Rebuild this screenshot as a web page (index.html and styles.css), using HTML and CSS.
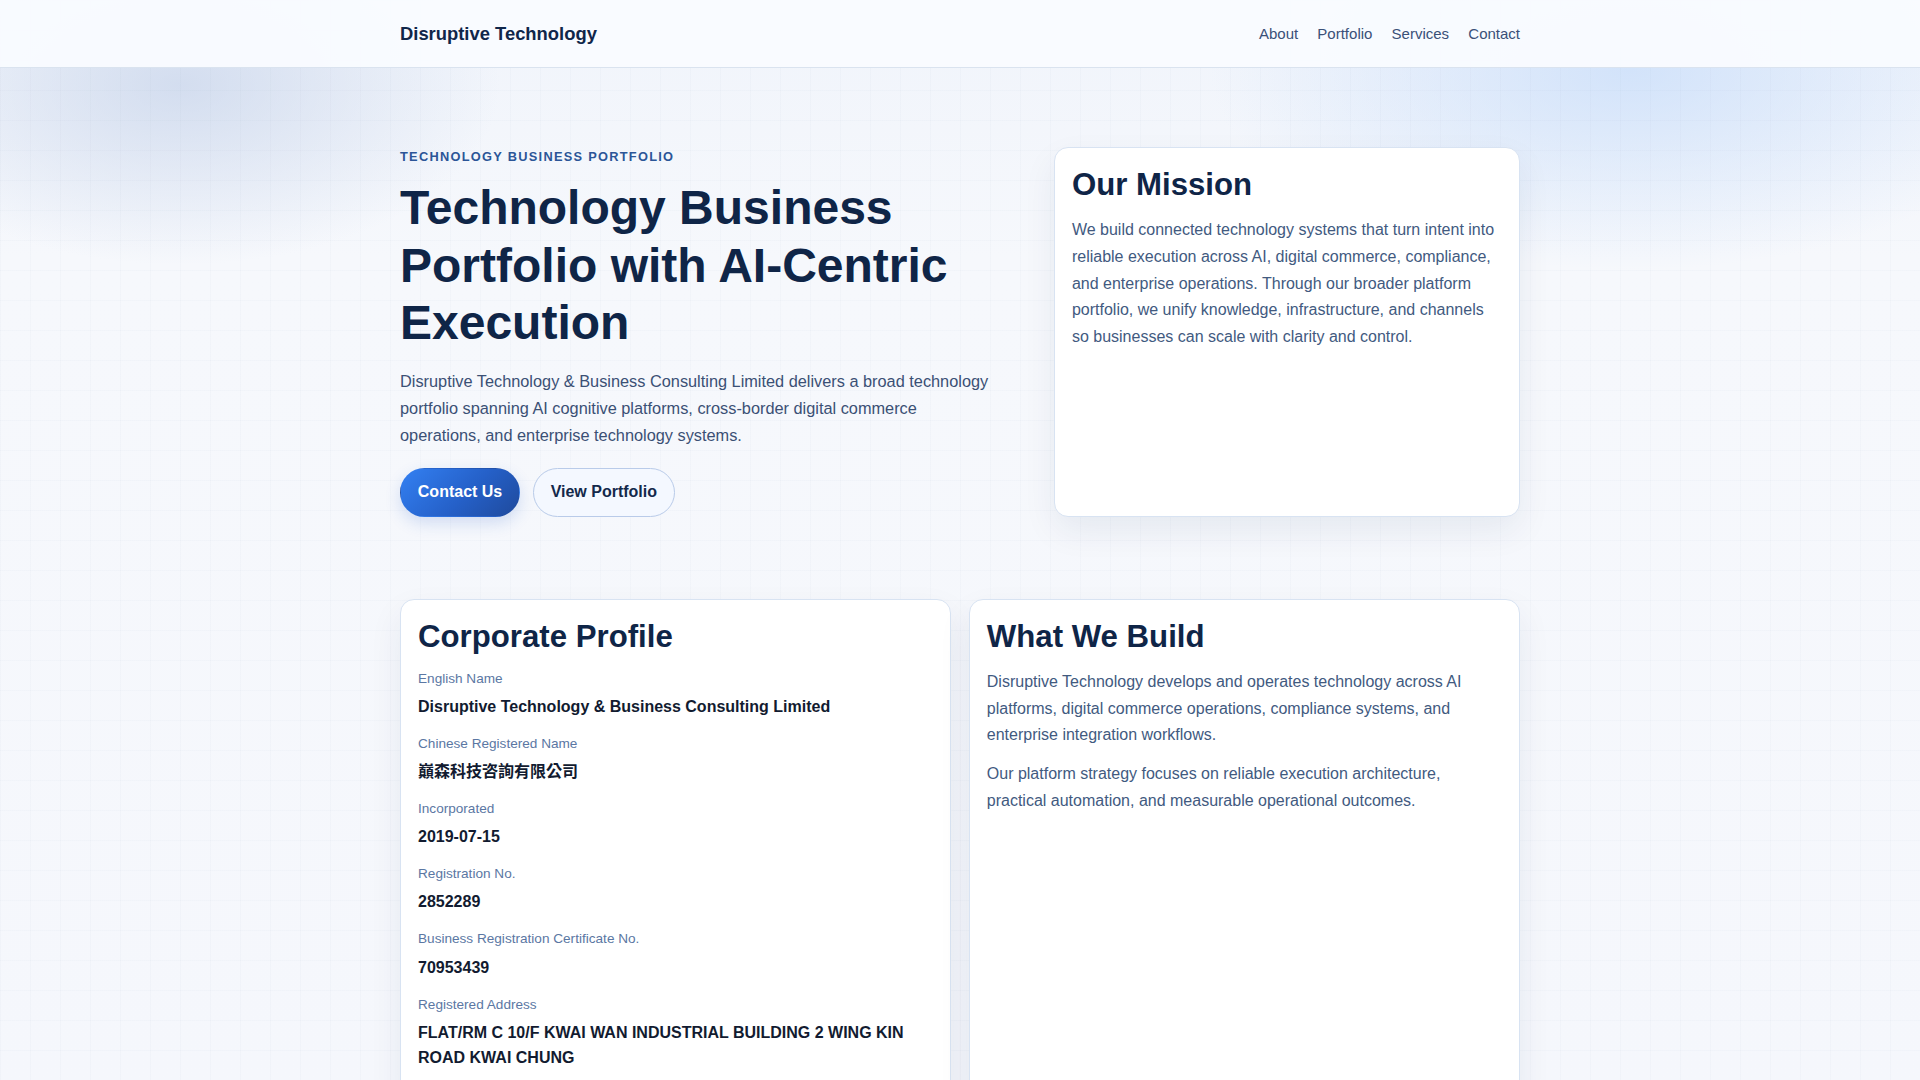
FILE: index.html
```html
<!DOCTYPE html>
<html lang="en">
<head>
<meta charset="utf-8">
<title>Disruptive Technology</title>
<link rel="stylesheet" href="styles.css">
</head>
<body>
<header class="site-header">
  <div class="container header-inner">
    <a class="brand" href="#">Disruptive Technology</a>
    <nav class="nav">
      <a href="#about">About</a>
      <a href="#portfolio">Portfolio</a>
      <a href="#services">Services</a>
      <a href="#contact">Contact</a>
    </nav>
  </div>
</header>

<main>
  <section class="hero">
    <div class="container hero-grid">
      <div class="hero-copy">
        <p class="eyebrow">Technology Business Portfolio</p>
        <h1>Technology Business Portfolio with AI-Centric Execution</h1>
        <p class="lead">Disruptive Technology &amp; Business Consulting Limited delivers a broad technology portfolio spanning AI cognitive platforms, cross-border digital commerce operations, and enterprise technology systems.</p>
        <div class="actions">
          <a class="btn btn-primary" href="#contact">Contact Us</a>
          <a class="btn btn-secondary" href="#portfolio">View Portfolio</a>
        </div>
      </div>
      <aside class="card">
        <h2>Our Mission</h2>
        <p>We build connected technology systems that turn intent into reliable execution across AI, digital commerce, compliance, and enterprise operations. Through our broader platform portfolio, we unify knowledge, infrastructure, and channels so businesses can scale with clarity and control.</p>
      </aside>
    </div>
  </section>

  <section class="info" id="about">
    <div class="container info-grid">
      <article class="card">
        <h2>Corporate Profile</h2>
        <dl class="facts">
          <div class="fact"><dt>English Name</dt><dd>Disruptive Technology &amp; Business Consulting Limited</dd></div>
          <div class="fact"><dt>Chinese Registered Name</dt><dd lang="zh-Hant">巔森科技咨詢有限公司</dd></div>
          <div class="fact"><dt>Incorporated</dt><dd>2019-07-15</dd></div>
          <div class="fact"><dt>Registration No.</dt><dd>2852289</dd></div>
          <div class="fact"><dt>Business Registration Certificate No.</dt><dd>70953439</dd></div>
          <div class="fact"><dt>Registered Address</dt><dd>FLAT/RM C 10/F KWAI WAN INDUSTRIAL BUILDING 2 WING KIN ROAD KWAI CHUNG</dd></div>
        </dl>
      </article>
      <article class="card">
        <h2>What We Build</h2>
        <p>Disruptive Technology develops and operates technology across AI platforms, digital commerce operations, compliance systems, and enterprise integration workflows.</p>
        <p>Our platform strategy focuses on reliable execution architecture, practical automation, and measurable operational outcomes.</p>
      </article>
    </div>
  </section>
</main>
</body>
</html>
```

FILE: styles.css
```css
* { box-sizing: border-box; }

html, body { margin: 0; padding: 0; }

body {
  font-family: "Liberation Sans", Arial, "Noto Sans CJK TC", sans-serif;
  color: #10264a;
  min-height: 100vh;
  background:
    linear-gradient(to right, rgba(40, 70, 120, 0.02) 1px, transparent 1px) 0 0 / 30px 30px,
    linear-gradient(to bottom, rgba(40, 70, 120, 0.02) 1px, transparent 1px) 0 0 / 30px 30px,
    radial-gradient(ellipse 320px 180px at 180px 85px, rgba(198, 211, 234, 0.7), rgba(198, 211, 234, 0) 100%),
    radial-gradient(ellipse 420px 200px at 1630px 70px, rgba(200, 221, 250, 0.75), rgba(200, 221, 250, 0) 100%),
    linear-gradient(to bottom, #f0f4fb 0px, #f6f8fc 260px, #f5f7fc 100%);
  background-color: #f5f7fc;
}

a { text-decoration: none; color: inherit; }

.container {
  width: 1120px;
  margin: 0 auto;
}

/* Header */
.site-header {
  background: rgba(249, 251, 255, 0.96);
  border-bottom: 1px solid #dae3ef;
}

.header-inner {
  min-height: 67px;
  display: flex;
  align-items: center;
  justify-content: space-between;
}

.brand {
  font-size: 1.15rem;
  font-weight: 700;
  color: #10264a;
  line-height: 1.5;
}

.nav {
  display: flex;
  gap: 1.2rem;
  padding-top: 1px;
}

.nav a {
  font-size: 15px;
  color: #3a5078;
  line-height: 1.5;
}

/* Hero */
.hero {
  padding: 79px 0 82px;
}

.hero-grid {
  display: grid;
  grid-template-columns: 1.3fr 1fr;
  gap: 3rem;
  align-items: stretch;
}

.eyebrow {
  margin: 0 0 0.8rem;
  font-size: 0.8rem;
  font-weight: 700;
  letter-spacing: 0.1em;
  text-transform: uppercase;
  color: #2b5597;
  line-height: 1.5;
}

h1 {
  margin: 0 0 1rem;
  font-size: 3rem;
  line-height: 1.2;
  font-weight: 700;
  color: #0f2547;
}

.lead {
  margin: 0 0 1.25rem;
  max-width: 600px;
  font-size: 1.02rem;
  line-height: 1.65;
  color: #3b5075;
}

.actions {
  display: flex;
  gap: 0.8rem;
}

.btn {
  display: inline-block;
  padding: 0.875rem 1.05rem;
  border-radius: 999px;
  border: 1px solid transparent;
  font-size: 16px;
  font-weight: 700;
  line-height: 1.15;
}

.btn-primary {
  color: #ffffff;
  background: linear-gradient(135deg, #3380f2 0%, #2560c8 55%, #1f4a9c 100%);
  box-shadow: 0 6px 16px rgba(37, 96, 200, 0.18);
}

.btn-secondary {
  color: #13294b;
  background: #f4f8ff;
  border-color: #b9cbe9;
}

/* Cards */
.card {
  background: #ffffff;
  border: 1px solid #d8e3f2;
  border-radius: 14px;
  padding: 17px;
  box-shadow: 0 14px 34px rgba(20, 42, 82, 0.07);
}

.card h2 {
  margin: 0 0 0.8rem;
  font-size: 1.95rem;
  line-height: 1.25;
  font-weight: 700;
  color: #0f2547;
}

.card p {
  margin: 0 0 0.75rem;
  font-size: 16px;
  line-height: 1.68;
  color: #425a7f;
}

/* Info section */
.info-grid {
  display: grid;
  grid-template-columns: 1fr 1fr;
  gap: 1.1rem;
}

.facts {
  margin: 0;
}

.fact {
  margin-bottom: 0.9rem;
}

.fact dt {
  font-size: 0.85rem;
  line-height: 1.5;
  color: #5b77a3;
  margin-bottom: 0.3rem;
}

.fact dd {
  margin: 0;
  font-size: 16px;
  line-height: 1.6;
  font-weight: 700;
  color: #121b30;
}
```
